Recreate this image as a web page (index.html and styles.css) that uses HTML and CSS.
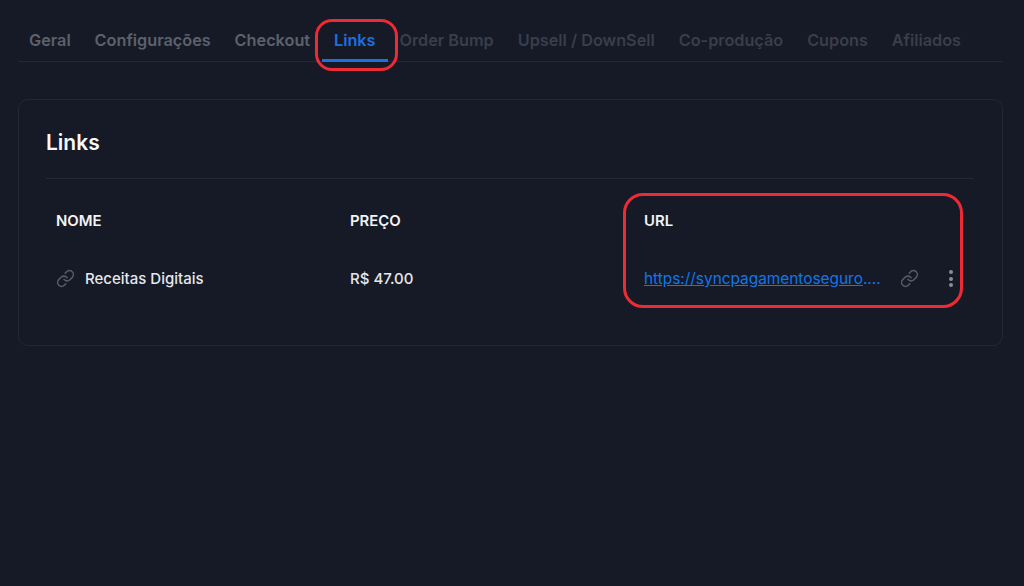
FILE: index.html
```html
<!DOCTYPE html>
<html>
<head>
    <title>Links</title>
    <link rel="stylesheet" href="styles.css">
</head>
<body>
    <div class="page">
        <nav class="tabs">
            <a class="tab tab-dim">Geral</a>
            <a class="tab tab-dim">Configurações</a>
            <a class="tab tab-dim">Checkout</a>
            <a class="tab tab-active">Links</a>
            <a class="tab tab-off">Order Bump</a>
            <a class="tab tab-off">Upsell / DownSell</a>
            <a class="tab tab-off">Co-produção</a>
            <a class="tab tab-off">Cupons</a>
            <a class="tab tab-off">Afiliados</a>
        </nav>

        <section class="card">
            <h2 class="card-title">Links</h2>
            <div class="link-table">
                <div class="cell-head">NOME</div>
                <div class="cell-head">PREÇO</div>
                <div class="cell-head">URL</div>

                <div class="cell-name">
                    <svg class="icon-link" viewBox="0 0 24 24"><path d="M10 13a5 5 0 0 0 7.54.54l3-3a5 5 0 0 0-7.07-7.07l-1.72 1.71"/><path d="M14 11a5 5 0 0 0-7.54-.54l-3 3a5 5 0 0 0 7.07 7.07l1.71-1.71"/></svg>
                    <span>Receitas Digitais</span>
                </div>
                <div class="cell-price">R$ 47.00</div>
                <div class="cell-url">
                    <a class="url-text"><span class="url-line">https://syncpagamentoseguro</span>....</a>
                    <svg class="icon-link" viewBox="0 0 24 24"><path d="M10 13a5 5 0 0 0 7.54.54l3-3a5 5 0 0 0-7.07-7.07l-1.72 1.71"/><path d="M14 11a5 5 0 0 0-7.54-.54l-3 3a5 5 0 0 0 7.07 7.07l1.71-1.71"/></svg>
                    <span class="dots"><i></i><i></i><i></i></span>
                </div>
            </div>
        </section>
    </div>

    <!-- marcações vermelhas por cima da tela -->
    <div class="mark mark-tab"></div>
    <div class="mark mark-url"></div>
</body>
</html>
```

FILE: styles.css
```css
body {
    font-family: 'Inter', sans-serif;
    background-color: #151a26;
    color: #f2f3f5;
    margin: 0;
    height: 586px;
    overflow: hidden;
}

.page {
    padding: 18px 21px 0 17px;
}

.tabs {
    display: flex;
    height: 43px;
    margin-left: 1px;
    border-bottom: 1px solid #232835;
}

.tab {
    padding: 12px 12px 0;
    margin-left: -0.1px;
    height: 31px;
    font-size: 16.25px;
    line-height: 21px;
    font-weight: 600;
    white-space: nowrap;
}

.tab:first-child {
    margin-left: -1px;
}

.tab-dim {
    color: #5d616b;
}

.tab-off {
    color: #3a3e4a;
}

.tab-active {
    color: #1f6fe0;
    height: 29px;
    border-bottom: 3px solid #1f6fe0;
}

.card {
    margin: 37px 0 0 1px;
    height: 245px;
    border: 1px solid #232835;
    border-radius: 10px;
    padding: 0 28px 0 27px;
}

.card-title {
    margin: 0;
    height: 78px;
    line-height: 85px;
    font-size: 21px;
    font-weight: 600;
    color: #f7f8f9;
    border-bottom: 1px solid #232835;
}

.link-table {
    display: grid;
    grid-template-columns: 294px 294px 1fr;
    grid-template-rows: 83px 33px;
    padding-left: 10px;
}

.cell-head {
    align-self: center;
    font-size: 14.9px;
    font-weight: 600;
    color: #f2f3f5;
}

.cell-name,
.cell-price,
.cell-url {
    display: flex;
    align-items: center;
    font-size: 15px;
    font-weight: 500;
    color: #e6e7ea;
}

.cell-name {
    gap: 10px;
}

.icon-link {
    width: 19px;
    height: 19px;
    flex: none;
    fill: none;
    stroke: #565a64;
    stroke-width: 2;
    stroke-linecap: round;
    stroke-linejoin: round;
}

.url-text {
    width: 256px;
    white-space: nowrap;
    font-size: 15.4px;
    color: #1475ea;
    font-weight: 400;
}

.url-line {
    text-decoration: underline;
}

.dots {
    display: flex;
    flex-direction: column;
    gap: 2.5px;
    margin-left: 30px;
}

.dots i {
    display: block;
    width: 4px;
    height: 4px;
    border-radius: 50%;
    background-color: #8a8d95;
}

.mark {
    position: absolute;
    box-sizing: border-box;
    border: 3px solid #ee2b35;
}

.mark-tab {
    left: 315px;
    top: 19px;
    width: 83px;
    height: 52px;
    border-radius: 17px;
}

.mark-url {
    left: 623px;
    top: 193px;
    width: 340px;
    height: 115px;
    border-radius: 20px;
}
```
